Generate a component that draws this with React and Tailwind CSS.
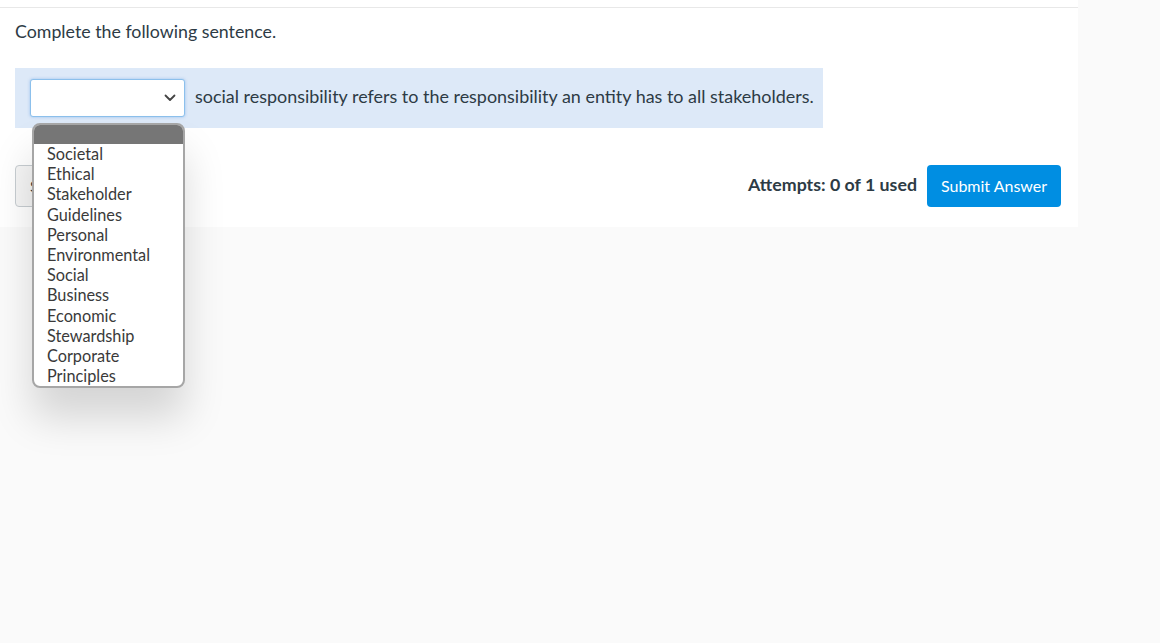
import React from "react";

const options = [
  "Societal",
  "Ethical",
  "Stakeholder",
  "Guidelines",
  "Personal",
  "Environmental",
  "Social",
  "Business",
  "Economic",
  "Stewardship",
  "Corporate",
  "Principles",
];

export default function App() {
  return (
    <div
      className="min-h-[643px] w-full bg-[#fafafa] text-[#2d3b45]"
      style={{ fontFamily: "Lato, 'Liberation Sans', sans-serif" }}
    >
      <div className="w-[1078px] bg-white">
        <div className="h-[8px] border-b border-[#e8e8e8]" />
        <div className="pl-[15px] pr-[17px] pt-[10px] pb-[20px]">
          <p className="text-[17.8px] leading-[26px]">Complete the following sentence.</p>
          <div className="mt-[24px] flex">
            <div className="flex items-center gap-[10px] bg-[#dde9f8] pl-[15px] pr-[9px] py-[11px]">
              <div className="relative">
                <div className="flex h-[38px] w-[155px] items-center justify-end rounded-[3px] border border-[#8cc0ec] bg-white pr-[8px] shadow-[0_0_3px_rgba(80,150,230,0.5)]">
                  <svg width="12" height="8" viewBox="0 0 12 8" fill="none">
                    <path d="M1.5 1.5 L6 6 L10.5 1.5" stroke="#444" strokeWidth="1.8" strokeLinecap="round" strokeLinejoin="round" />
                  </svg>
                </div>
                <div className="absolute left-[2px] top-[44px] z-10 w-[153px] overflow-hidden rounded-[8px] border-2 border-[#a6a6a6] bg-white shadow-[0_30px_40px_rgba(0,0,0,0.15)]">
                  <div className="h-[19px] bg-[#767676]" />
                  {options.map((o) => (
                    <div key={o} className="h-[20.2px] pl-[13px] text-[16.3px] leading-[20px] text-[#3a3a3a]">
                      {o}
                    </div>
                  ))}
                </div>
              </div>
              <span className="whitespace-nowrap text-[17.94px] leading-[26px] -mt-[4px]">
                social responsibility refers to the responsibility an entity has to all stakeholders.
              </span>
            </div>
          </div>
          <div className="mt-[37px] flex items-center justify-between">
            <button className="h-[42px] rounded-[4px] border border-[#c7cdd1] bg-[#f5f5f5] px-[14px] text-[16px] text-[#2d3b45]">
              Save
            </button>
            <div className="flex items-center gap-[10px]">
              <span className="-mt-[3px] text-[17.8px] font-bold">Attempts: 0 of 1 used</span>
              <button className="h-[42px] w-[134px] rounded-[4px] bg-[#008ee2] text-[16px] text-white">
                Submit Answer
              </button>
            </div>
          </div>
        </div>
      </div>
    </div>
  );
}
